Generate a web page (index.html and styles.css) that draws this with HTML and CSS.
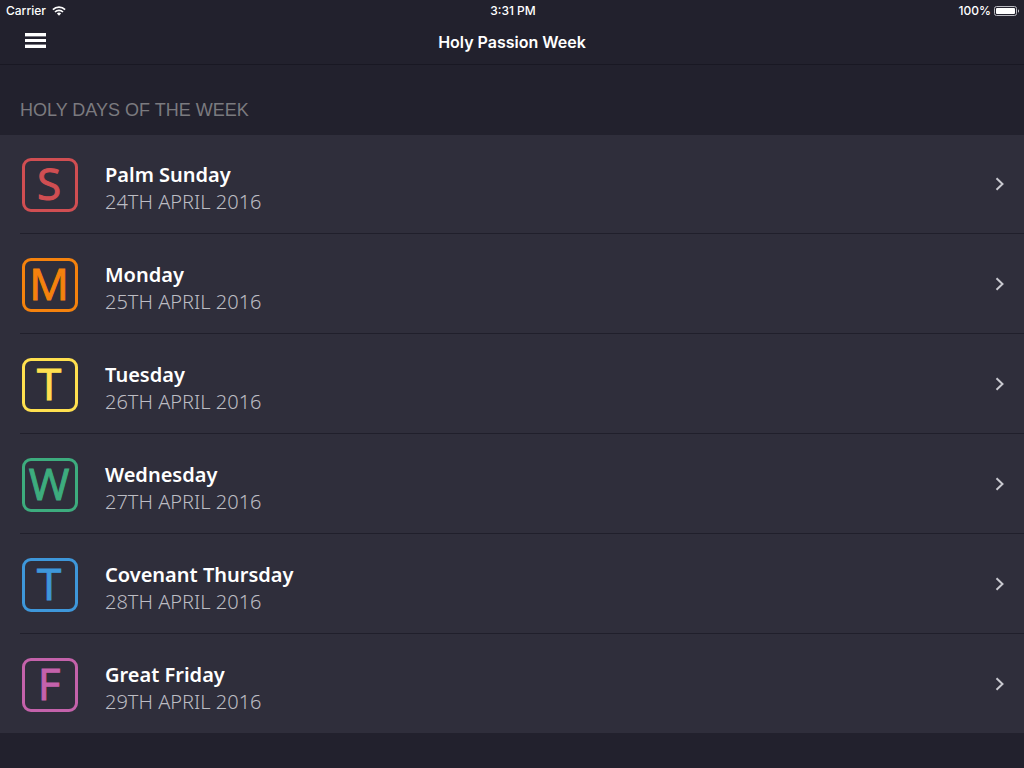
FILE: index.html
```html
<!DOCTYPE html>
<html lang="en">
<head>
<meta charset="utf-8">
<meta name="viewport" content="width=device-width, initial-scale=1">
<title>Holy Passion Week</title>
<link rel="stylesheet" href="styles.css">
</head>
<body>
<header class="top">
  <div class="status">
    <span class="carrier">Carrier
      <svg class="wifi" viewBox="0 0 14 10" aria-hidden="true"><path d="M.9 3.7a8.7 8.7 0 0 1 12.2 0M3 6a5.7 5.7 0 0 1 8 0" fill="none" stroke="currentColor" stroke-width="1.7"/><path d="M4.9 7.5a3 3 0 0 1 4.2 0L7 9.7z" fill="currentColor"/></svg>
    </span>
    <time class="clock">3:31 PM</time>
    <span class="power">100%
      <svg class="battery" viewBox="0 0 26 10" aria-hidden="true"><rect x=".5" y=".5" width="22" height="9" rx="2" fill="none" stroke="#b9b9c0"/><rect x="2" y="2" width="19" height="6" rx="1" fill="#fff"/><path d="M24 3.2c1.3.6 1.3 3 0 3.6z" fill="#d4d4da"/></svg>
    </span>
  </div>
  <nav class="bar">
    <button class="menu" type="button" aria-label="Menu">
      <svg viewBox="0 0 21 15" aria-hidden="true"><path d="M0 3h21v1H0zM0 11h21v1H0z" fill="#77767f"/><path d="M0 0h21v3H0zM0 6h21v3H0zM0 12h21v3H0z" fill="#fff"/></svg>
    </button>
    <h1 class="title">Holy Passion Week</h1>
  </nav>
</header>
<main>
  <h2 class="section">HOLY DAYS OF THE WEEK</h2>
  <ul class="days">
    <li><a class="day red" href="#sunday"><span class="badge" aria-hidden="true">S</span><span class="text"><span class="name">Palm Sunday</span><span class="date">24TH APRIL 2016</span></span><svg class="chevron" viewBox="0 0 9 14" aria-hidden="true"><path d="M1.5 1.2 7.5 7l-6 5.8"/></svg></a></li>
    <li><a class="day orange" href="#monday"><span class="badge" aria-hidden="true">M</span><span class="text"><span class="name">Monday</span><span class="date">25TH APRIL 2016</span></span><svg class="chevron" viewBox="0 0 9 14" aria-hidden="true"><path d="M1.5 1.2 7.5 7l-6 5.8"/></svg></a></li>
    <li><a class="day yellow" href="#tuesday"><span class="badge" aria-hidden="true">T</span><span class="text"><span class="name">Tuesday</span><span class="date">26TH APRIL 2016</span></span><svg class="chevron" viewBox="0 0 9 14" aria-hidden="true"><path d="M1.5 1.2 7.5 7l-6 5.8"/></svg></a></li>
    <li><a class="day green" href="#wednesday"><span class="badge" aria-hidden="true">W</span><span class="text"><span class="name">Wednesday</span><span class="date">27TH APRIL 2016</span></span><svg class="chevron" viewBox="0 0 9 14" aria-hidden="true"><path d="M1.5 1.2 7.5 7l-6 5.8"/></svg></a></li>
    <li><a class="day blue" href="#thursday"><span class="badge" aria-hidden="true">T</span><span class="text"><span class="name">Covenant Thursday</span><span class="date">28TH APRIL 2016</span></span><svg class="chevron" viewBox="0 0 9 14" aria-hidden="true"><path d="M1.5 1.2 7.5 7l-6 5.8"/></svg></a></li>
    <li><a class="day pink" href="#friday"><span class="badge" aria-hidden="true">F</span><span class="text"><span class="name">Great Friday</span><span class="date">29TH APRIL 2016</span></span><svg class="chevron" viewBox="0 0 9 14" aria-hidden="true"><path d="M1.5 1.2 7.5 7l-6 5.8"/></svg></a></li>
  </ul>
</main>
</body>
</html>
```
FILE: styles.css
```css
* { box-sizing: border-box; }

body {
  margin: 0;
  min-height: 100vh;
  background: #22212d;
  color: #fff;
  font-family: Inter, "Liberation Sans", sans-serif;
}

.top { border-bottom: 1px solid #191823; }

.status {
  display: grid;
  grid-template-columns: 1fr auto 1fr;
  align-items: center;
  padding: 1px 4px 0 6px;
  font-size: 12px;
  line-height: 19px;
  font-weight: 500;
}

.carrier, .power {
  display: flex;
  align-items: center;
  gap: 6px;
}

.power { justify-content: flex-end; gap: 3px; }
.wifi { width: 14px; height: 10px; }
.battery { width: 26px; height: 10px; }

.bar {
  display: grid;
  grid-template-columns: 1fr auto 1fr;
  align-items: center;
  height: 44px;
  padding: 0 20px;
}

.menu {
  justify-self: start;
  padding: 8px 5px 11px;
  border: 0;
  background: none;
  cursor: pointer;
}

.menu svg { display: block; width: 21px; height: 15px; }

.title {
  margin: 0;
  font-size: 16px;
  line-height: 44px;
  font-weight: 600;
}

.section {
  margin: 0;
  padding: 34px 20px 14px;
  color: #7b7a7f;
  font-family: "Liberation Sans", Arial, sans-serif;
  font-size: 18px;
  line-height: 22px;
  font-weight: 400;
}

.days {
  margin: 0;
  padding: 0 0 0 20px;
  list-style: none;
  background: #2f2e3b;
}

.days li + li { border-top: 1px solid #201f2b; }
.days li:first-child .day { padding-top: 23px; }

.day {
  display: flex;
  align-items: flex-start;
  padding: 24px 20px 18px 2px;
  color: #fff;
  text-decoration: none;
  font-family: "Noto Sans", "Open Sans", sans-serif;
}

.badge {
  width: 56px;
  height: 54px;
  padding-right: 2px;
  border: 3px solid;
  border-radius: 9px;
  font-family: "Open Sans", "Noto Sans", sans-serif;
  font-size: 44px;
  line-height: 44px;
  text-align: center;
  -webkit-text-stroke: 1px currentColor;
}

.text {
  flex: 1;
  display: flex;
  flex-direction: column;
  margin-left: 27px;
  padding-top: 3px;
}

.name { font-size: 20px; line-height: 27px; font-weight: 600; }
.date { font-size: 20px; line-height: 27px; font-weight: 300; color: #bcbcc3; }

.chevron {
  width: 9px;
  height: 14px;
  margin-top: 19px;
  fill: none;
  stroke: #c9c9d0;
  stroke-width: 2;
}

.red .badge { color: #d04e52; }
.orange .badge { color: #f5820d; }
.yellow .badge { color: #ffe04f; }
.green .badge { color: #3dac7e; }
.blue .badge { color: #3e97da; }
.pink .badge { color: #c462ab; }
```
